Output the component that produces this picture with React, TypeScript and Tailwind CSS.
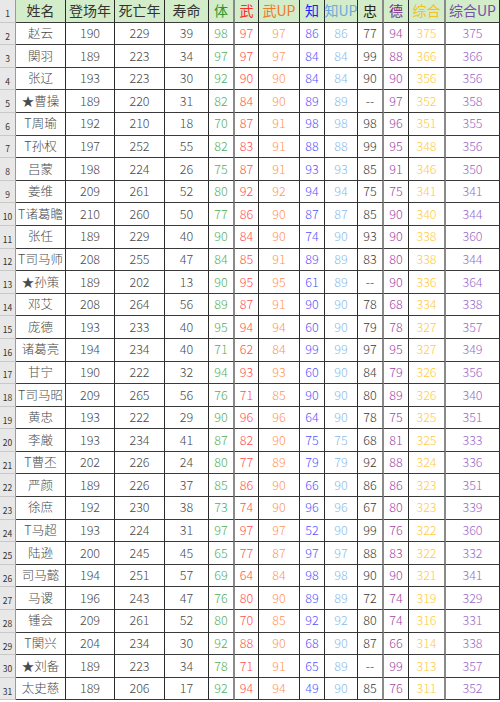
const cols = ['16px', '50px', '49px', '50px', '44px', '26px', '24px', '41px', '25px', '33px', '26px', '25px', '37px', '54px'];

const headers = [
  { t: '姓名', c: 'text-[#333333]' },
  { t: '登场年', c: 'text-[#333333]' },
  { t: '死亡年', c: 'text-[#333333]' },
  { t: '寿命', c: 'text-[#333333]' },
  { t: '体', c: 'text-[#2f962f]' },
  { t: '武', c: 'text-[#ff2a2a]' },
  { t: '武UP', c: 'text-[#f07a2a]' },
  { t: '知', c: 'text-[#1e1eff]' },
  { t: '知UP', c: 'text-[#6fa9dc]' },
  { t: '忠', c: 'text-[#222222]' },
  { t: '德', c: 'text-[#7a2a8c]' },
  { t: '综合', c: 'text-[#f5c020]' },
  { t: '综合UP', c: 'text-[#7352a8]' },
];

const cellColors = [
  'text-[#4a4a4a]',
  'text-[#4a4a4a]',
  'text-[#4a4a4a]',
  'text-[#4a4a4a]',
  'text-[#55b055]',
  'text-[#ff5050]',
  'text-[#ff9655]',
  'text-[#5555ff]',
  'text-[#8cbcea]',
  'text-[#3a3a3a]',
  'text-[#a048a8]',
  'text-[#ffcb45]',
  'text-[#9a6ac8]',
];

const rows = [
  '赵云 190 229 39 98 97 97 86 86 77 94 375 375',
  '関羽 189 223 34 97 97 97 84 84 99 88 366 366',
  '张辽 193 223 30 92 90 90 84 84 90 90 356 356',
  '★曹操 189 220 31 82 84 90 89 89 -- 97 352 358',
  'T周瑜 192 210 18 70 87 91 98 98 98 96 351 355',
  'T孙权 197 252 55 82 83 91 88 88 99 95 348 356',
  '吕蒙 198 224 26 75 87 91 93 93 85 91 346 350',
  '姜维 209 261 52 80 92 92 94 94 75 75 341 341',
  'T诸葛瞻 210 260 50 77 86 90 87 87 85 90 340 344',
  '张任 189 229 40 90 84 90 74 90 93 90 338 360',
  'T司马师 208 255 47 84 85 91 89 89 83 80 338 344',
  '★孙策 189 202 13 90 95 95 61 89 -- 90 336 364',
  '邓艾 208 264 56 89 87 91 90 90 78 68 334 338',
  '庞德 193 233 40 95 94 94 60 90 79 78 327 357',
  '诸葛亮 194 234 40 71 62 84 99 99 97 95 327 349',
  '甘宁 190 222 32 94 93 93 60 90 84 79 326 356',
  'T司马昭 209 265 56 76 71 85 90 90 80 89 326 340',
  '黄忠 193 222 29 90 96 96 64 90 78 75 325 351',
  '李厳 193 234 41 87 82 90 75 75 68 81 325 333',
  'T曹丕 202 226 24 80 77 89 79 79 92 88 324 336',
  '严颜 189 226 37 85 86 90 66 90 86 86 323 351',
  '徐庶 192 230 38 73 74 90 96 96 67 80 323 339',
  'T马超 193 224 31 97 97 97 52 90 99 76 322 360',
  '陆逊 200 245 45 65 77 87 97 97 88 83 322 332',
  '司马懿 194 251 57 69 64 84 98 98 90 90 321 341',
  '马谡 196 243 47 76 80 90 89 89 72 74 319 329',
  '锺会 209 261 52 80 70 85 92 92 80 74 316 331',
  'T関兴 204 234 30 92 88 90 68 90 87 66 314 338',
  '★刘备 189 223 34 78 71 91 65 89 -- 99 313 357',
  '太史慈 189 206 17 92 94 94 49 90 85 76 311 352',
].map((r) => r.split(' '));

// columns whose right edge shows as a soft grey double line in the screenshot
const greyRight = [4, 9, 11];

function Cell({ i, children, className }: { i: number; children: React.ReactNode; className: string }) {
  const edge = greyRight.includes(i) ? 'border-r-2 border-r-[#8a8a8a]' : 'border-r border-r-[#2a2a2a]';
  return (
    <div className={`flex items-center justify-center whitespace-nowrap border-b border-b-[#3a3a3a] ${edge} ${className}`}>
      {children}
    </div>
  );
}

function RowNum({ n }: { n: number }) {
  return (
    <div className="flex items-center justify-center pt-[5px] bg-[#e8e8e8] border-r border-r-[#9a9a9a] border-b border-b-[#c8c8c8] text-[8.5px] text-[#333333]">
      {n}
    </div>
  );
}

export default function App() {
  return (
    <div
      className="w-[500px] h-[702px] overflow-hidden bg-white"
      style={{ fontFamily: '"Noto Sans CJK SC", "Noto Sans", sans-serif' }}
    >
      <div
        className="grid auto-rows-[22.6px]"
        style={{ gridTemplateColumns: cols.join(' ') }}
      >
        <RowNum n={1} />
        {headers.map((h, i) => (
          <Cell key={h.t} i={i} className={`bg-[#d3ecc9] text-[14px] ${h.c}`}>
            {h.t}
          </Cell>
        ))}
        {rows.map((r, ri) => (
          <div key={ri} className="contents">
            <RowNum n={ri + 2} />
            {r.map((v, ci) => (
              <Cell key={ci} i={ci} className={`text-[12.5px] font-light ${cellColors[ci]}`}>
                {v}
              </Cell>
            ))}
          </div>
        ))}
      </div>
    </div>
  );
}
